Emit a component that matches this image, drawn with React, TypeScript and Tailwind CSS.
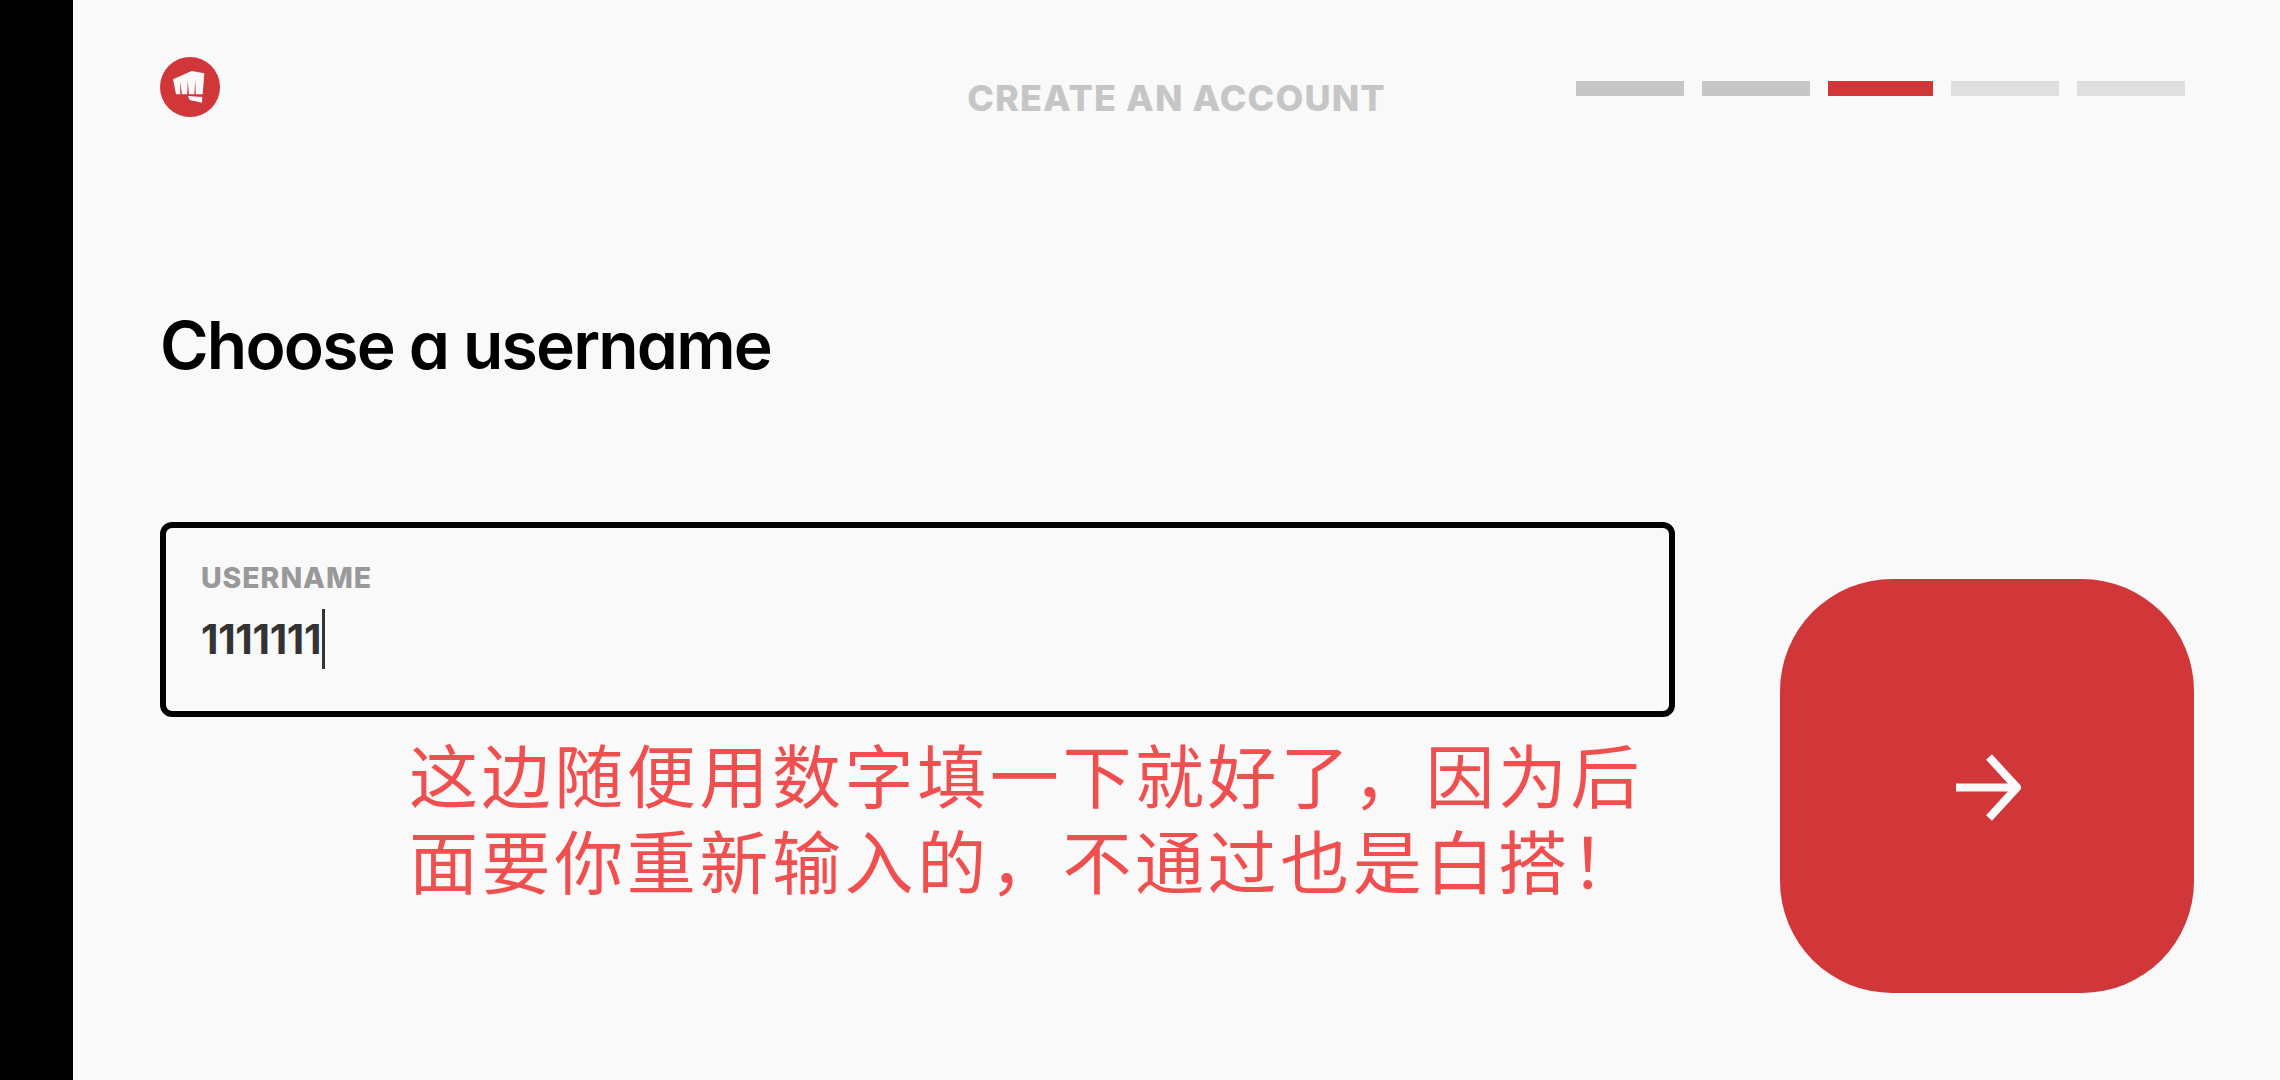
import React, { useState } from 'react';

const steps = [
  { id: 'email', width: 'w-[108px]', color: 'bg-[#c6c6c6]' },
  { id: 'birthday', width: 'w-[108px]', color: 'bg-[#c6c6c6]' },
  { id: 'username', width: 'w-[105px]', color: 'bg-[#d13639]' },
  { id: 'password', width: 'w-[108px]', color: 'bg-[#dfdfdf]' },
  { id: 'confirm', width: 'w-[108px]', color: 'bg-[#dfdfdf]' },
];

const FistLogo: React.FC = () => (
  <svg width="60" height="60" viewBox="0 0 180 180" fill="#fbf9fa">
    <circle cx="90" cy="90" r="90" fill="#d13639" />
    <path d="M39 67 95 42l38 7-5 63h-21l-1-44-3 44H87l-4-42-1 42H66l-6-39 1 39H48z" />
    <path d="M84 117l43 3-1 17-37-8z" />
  </svg>
);

const Header: React.FC = () => (
  <header className="grid grid-cols-[1fr_auto_1fr] items-start px-[87px] pt-[57px] h-[200px]">
    <FistLogo />
    <h2 className="mt-[21px] text-[36px] leading-[40px] font-extrabold tracking-[1.1px] text-[#c6c6c6] whitespace-nowrap">
      CREATE AN ACCOUNT
    </h2>
    <div className="mt-6 pr-2 flex justify-end gap-[18px]">
      {steps.map((step) => (
        <span key={step.id} className={`h-[15px] ${step.width} ${step.color}`} />
      ))}
    </div>
  </header>
);

interface UsernameFieldProps {
  value: string;
}

const UsernameField: React.FC<UsernameFieldProps> = ({ value }) => (
  <div className="w-[1515px] h-[195px] rounded-xl border-[6px] border-black pl-[35px] pr-9 pt-[34px]">
    <div className="text-[28.5px] leading-[32px] font-extrabold tracking-[0.9px] text-[#999999]">USERNAME</div>
    <div className="mt-[15px] flex items-center">
      <span className="pt-0.5 text-[40.5px] leading-[58px] font-bold tracking-[-0.3px] text-[#333333]">{value}</span>
      <span className="ml-px w-[3px] h-[60px] bg-[#333333]" />
    </div>
  </div>
);

export default function App() {
  const [username] = useState('1111111');

  return (
    <div className="w-[2280px] h-[1080px] flex overflow-hidden bg-[#f9f9f9] font-['Inter','Noto_Sans_CJK_SC',sans-serif]">
      <div className="w-[73px] shrink-0 bg-black" />
      <main className="flex-1 flex flex-col">
        <Header />
        <h1 className="ml-[87px] mt-[105px] text-[66px] leading-[80px] font-semibold tracking-[-1.8px] text-black [font-feature-settings:'cv11'] whitespace-nowrap self-start">
          Choose a username
        </h1>
        <div className="mt-[137px] pl-[87px] flex items-start">
          <div>
            <UsernameField value={username} />
            <p className="ml-[249px] mt-[13px] text-[69px] leading-[86px] tracking-[3.6px] text-[#f04f4f] whitespace-nowrap font-['Noto_Sans_CJK_SC',sans-serif]">
              这边随便用数字填一下就好了，因为后
              <br />
              面要你重新输入的，不通过也是白搭！
            </p>
          </div>
          <button
            type="button"
            aria-label="Next"
            className="ml-[105px] mt-[57px] w-[414px] h-[414px] shrink-0 rounded-[112px] bg-[#d13639] flex items-center justify-center"
          >
            <svg width="70" height="70" viewBox="0 0 70 70" fill="none" stroke="#fbf9fa" strokeWidth="8" strokeLinejoin="round">
              <path d="M4 36.5h60M37 6 65 36.5 37 67" />
            </svg>
          </button>
        </div>
      </main>
    </div>
  );
}
